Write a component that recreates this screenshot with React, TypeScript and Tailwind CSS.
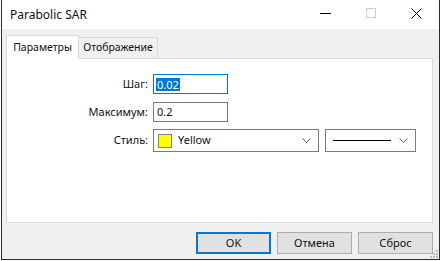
import React from "react";

function Chevron() {
  return (
    <svg width="9" height="5" viewBox="0 0 9 5" className="shrink-0">
      <path d="M0.5 0.5 L4.5 4.5 L8.5 0.5" fill="none" stroke="#606060" strokeWidth="1" />
    </svg>
  );
}

export default function App() {
  return (
    <div className="w-[441px] h-[261px] bg-white font-['Noto_Sans',sans-serif] text-[11px] text-[#111]">
      <div className="relative ml-[1px] w-[439px] h-[260px] border border-[#2b2b2b] border-t-0 flex flex-col bg-[#f0f0f0]">
        {/* title bar */}
        <div className="h-[29px] shrink-0 bg-white flex items-center">
          <span className="pl-[8px] text-[12px] flex-1">Parabolic SAR</span>
          <div className="flex h-full items-center pb-[3px]">
            <div className="w-[45px] flex items-center justify-center">
              <div className="w-[11px] h-px bg-black" />
            </div>
            <div className="w-[45px] flex items-center justify-center">
              <div className="w-[10px] h-[10px] border border-[#cccccc]" />
            </div>
            <div className="w-[46px] flex items-center justify-center">
              <svg width="11" height="11" viewBox="0 0 11 11">
                <path d="M0.5 0.5 L10.5 10.5 M10.5 0.5 L0.5 10.5" stroke="#000" strokeWidth="1" />
              </svg>
            </div>
          </div>
        </div>

        {/* tabs */}
        <div className="shrink-0 pt-[6px] pl-[4px]">
          <div className="flex items-end h-[23px] text-[10.5px]">
            <div className="h-[24px] -mb-px relative z-10 w-[73px] justify-center bg-white border border-[#d9d9d9] border-b-0 flex items-center">
              Параметры
            </div>
            <div className="h-[21px] w-[79px] justify-center bg-[#f0f0f0] border border-[#d9d9d9] border-l-0 border-b-0 flex items-center">
              Отображение
            </div>
          </div>
          <div className="w-[427px] h-[165px] bg-white border border-[#d9d9d9] pt-[15px] flex flex-col">
            <div className="flex items-center">
              <span className="w-[141px] text-right">Шаг:</span>
              <div className="ml-[5px] w-[75px] h-[20px] border border-[#0078d7] flex items-center px-[2px]">
                <span className="bg-[#0078d7] text-white px-px leading-[13px]">0.02</span>
              </div>
            </div>
            <div className="flex items-center mt-[8px]">
              <span className="w-[141px] text-right">Максимум:</span>
              <div className="ml-[5px] w-[75px] h-[20px] border border-[#7a7a7a] flex items-center px-[3px]">
                0.2
              </div>
            </div>
            <div className="flex items-center mt-[7px]">
              <span className="w-[141px] text-right">Стиль:</span>
              <div className="ml-[5px] w-[166px] h-[23px] border border-[#7a7a7a] flex items-center pl-[4px] pr-[7px]">
                <div className="w-[14px] h-[14px] bg-[#ffff00] border border-[#808080]" />
                <span className="ml-[6px] flex-1">Yellow</span>
                <Chevron />
              </div>
              <div className="ml-[6px] w-[91px] h-[23px] border border-[#7a7a7a] flex items-center pl-[7px] pr-[7px]">
                <div className="w-[58px] h-px bg-black" />
                <div className="flex-1" />
                <Chevron />
              </div>
            </div>
          </div>
        </div>

        {/* buttons */}
        <div className="shrink-0 flex justify-end gap-[6px] pr-[6px] pt-[9px]">
          <button className="w-[75px] h-[22px] bg-[#e1e1e1] border-2 border-[#0078d7]">OK</button>
          <button className="w-[75px] h-[22px] bg-[#e1e1e1] border border-[#adadad]">Отмена</button>
          <button className="w-[75px] h-[22px] bg-[#e1e1e1] border border-[#adadad]">Сброс</button>
        </div>

        {/* size grip */}
        <svg width="8" height="8" viewBox="0 0 8 8" className="absolute right-[1px] bottom-[1px]">
          <rect x="6" y="0" width="2" height="2" fill="#bdbdbd" />
          <rect x="3" y="3" width="2" height="2" fill="#bdbdbd" />
          <rect x="6" y="3" width="2" height="2" fill="#bdbdbd" />
          <rect x="0" y="6" width="2" height="2" fill="#bdbdbd" />
          <rect x="3" y="6" width="2" height="2" fill="#bdbdbd" />
          <rect x="6" y="6" width="2" height="2" fill="#bdbdbd" />
        </svg>
      </div>
    </div>
  );
}
